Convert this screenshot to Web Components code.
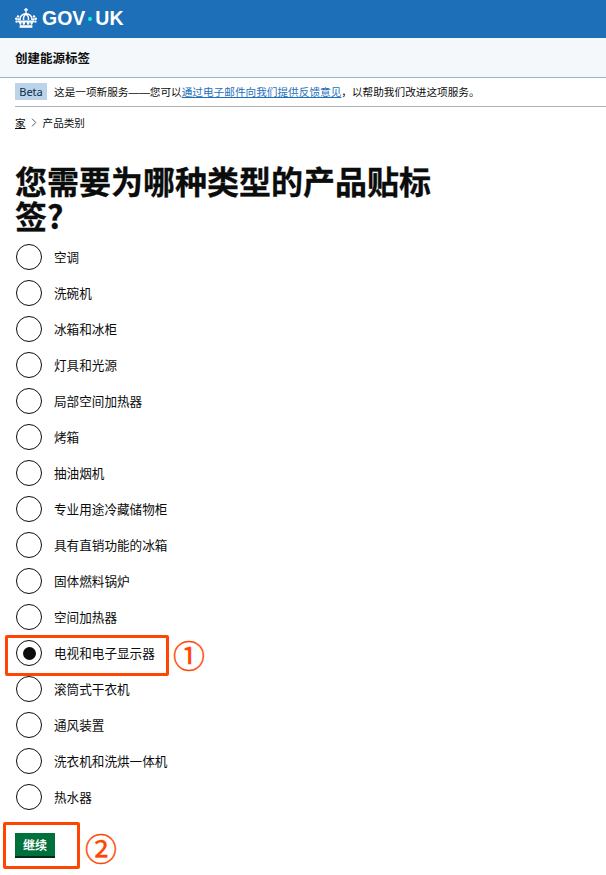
<!DOCTYPE html>
<html lang="zh">
<head>
<meta charset="utf-8">
<title>创建能源标签</title>
<style>
  html, body { margin: 0; padding: 0; background: #fff; }
  body { font-family: "Liberation Sans", "Noto Sans CJK SC", sans-serif; color: #0b0c0c; position: relative; min-height: 875px; }
</style>
</head>
<body>
<gov-header></gov-header>
<gov-service-bar>创建能源标签</gov-service-bar>
<gov-phase-banner>这是一项新服务——您可以<a href="#">通过电子邮件向我们提供反馈意见</a>，以帮助我们改进这项服务。</gov-phase-banner>
<gov-breadcrumbs current="产品类别">家</gov-breadcrumbs>
<product-form title-text="您需要为哪种类型的产品贴标签?">
  <gov-radio>空调</gov-radio>
  <gov-radio>洗碗机</gov-radio>
  <gov-radio>冰箱和冰柜</gov-radio>
  <gov-radio>灯具和光源</gov-radio>
  <gov-radio>局部空间加热器</gov-radio>
  <gov-radio>烤箱</gov-radio>
  <gov-radio>抽油烟机</gov-radio>
  <gov-radio>专业用途冷藏储物柜</gov-radio>
  <gov-radio>具有直销功能的冰箱</gov-radio>
  <gov-radio>固体燃料锅炉</gov-radio>
  <gov-radio>空间加热器</gov-radio>
  <gov-radio checked>电视和电子显示器</gov-radio>
  <gov-radio>滚筒式干衣机</gov-radio>
  <gov-radio>通风装置</gov-radio>
  <gov-radio>洗衣机和洗烘一体机</gov-radio>
  <gov-radio>热水器</gov-radio>
  <gov-button>继续</gov-button>
</product-form>
<call-out num="①" style="--x:5px;--y:635px;--w:164px;--h:41px;--nx:173px;--ny:633px"></call-out>
<call-out num="②" style="--x:3px;--y:822px;--w:77px;--h:47px;--nx:85px;--ny:826px"></call-out>

<script>
class GovHeader extends HTMLElement {
  constructor() {
    super();
    this.attachShadow({ mode: "open" });
    this.shadowRoot.innerHTML = `
      <style>
        :host { display: flex; align-items: center; height: 38px; background: #1d70b8; color: #fff; padding-left: 15px; box-sizing: border-box; }
        svg { width: 22px; height: 20px; margin: -3px 5px 0 0; display: block; }
        .logo { font: bold 19.5px/36px "Liberation Sans", sans-serif; margin-top: -2px; display: flex; align-items: center; }
        .dot { width: 4px; height: 4px; border-radius: 50%; background: #00ffe0; margin: 2px 3px 0 3px; }
      </style>
      <svg viewBox="0 0 22 20" fill="#fff" aria-hidden="true">
        <path d="M10.300 0h1.400v1.200h1.300v1.400h-1.300v2.200h-1.400V2.600H9V1.200h1.300z"/>
        <circle cx="11" cy="5.600" r="1.200"/>
        <path d="M5 12c-.4-3.600 2.400-6.200 6-6.200s6.400 2.600 6 6.200M8.600 12c-.4-2.600.6-4.800 2.400-5.600 1.800.8 2.800 3 2.400 5.600" fill="none" stroke="#fff" stroke-width="1.500"/>
        <circle cx="3" cy="8.400" r="1.200"/><circle cx="19" cy="8.400" r="1.200"/>
        <circle cx="1.300" cy="10.800" r="1.300"/><circle cx="20.700" cy="10.800" r="1.300"/>
        <circle cx="3.600" cy="11.400" r="1.200"/><circle cx="18.400" cy="11.400" r="1.200"/>
        <circle cx="1.600" cy="13.600" r="1.200"/><circle cx="20.400" cy="13.600" r="1.200"/>
        <path d="M3 12.600h16v1.300c-1 .5-1.600 1.600-1.900 2.900h-1.300l-.5-2.600h-.7l-.6 2.600h-1.600l-.8-2.600h-1.200l-.8 2.600H8l-.6-2.600h-.7l-.5 2.600H4.900C4.600 15.500 4 14.400 3 13.900z"/>
        <rect x="4.600" y="17.200" width="12.800" height="2.600"/>
      </svg>
      <span class="logo">GOV<span class="dot"></span>UK</span>`;
  }
}

class GovServiceBar extends HTMLElement {
  constructor() {
    super();
    this.attachShadow({ mode: "open" });
    this.shadowRoot.innerHTML = `
      <style>
        :host { display: flex; align-items: center; height: 40px; box-sizing: border-box; padding: 0 15px 1px; background: #f4f8fb; border-bottom: 1px solid #8eb8dc; font-size: 12.5px; font-weight: bold; color: #0b0c0c; }
      </style>
      <slot></slot>`;
  }
}

class GovPhaseBanner extends HTMLElement {
  constructor() {
    super();
    this.attachShadow({ mode: "open" });
    this.shadowRoot.innerHTML = `
      <style>
        :host { display: flex; align-items: center; height: 29px; box-sizing: border-box; margin-left: 15px; padding-bottom: 1px; border-bottom: 1px solid #b1b4b6; font-size: 10.65px; color: #0b0c0c; white-space: nowrap; }
        .tag { display: block; width: 32px; height: 17px; line-height: 17px; margin-right: 7px; text-align: center; background: #bbd4ea; color: #0c2d4a; font-family: "Noto Sans", sans-serif; font-size: 11px; }
        ::slotted(a) { color: #1d70b8; text-decoration: underline; }
      </style>
      <span class="tag">Beta</span><span><slot></slot></span>`;
  }
}

class GovBreadcrumbs extends HTMLElement {
  constructor() {
    super();
    this.attachShadow({ mode: "open" });
    this.shadowRoot.innerHTML = `
      <style>
        :host { display: flex; align-items: center; height: 30px; padding-left: 15px; font-size: 10.6px; color: #0b0c0c; }
        a { color: inherit; text-decoration: underline; }
        svg { width: 6px; height: 9px; margin: 1px 6px 0 5px; }
      </style>
      <a href="#"><slot></slot></a>
      <svg viewBox="0 0 6 9"><path d="M1 .7 4.800 4.500 1 8.300" fill="none" stroke="#505a5f" stroke-width="1"/></svg>
      <span>${this.getAttribute("current") || ""}</span>`;
  }
}

class ProductForm extends HTMLElement {
  constructor() {
    super();
    this.attachShadow({ mode: "open" });
    this.shadowRoot.innerHTML = `
      <style>
        :host { display: block; padding: 26px 15px 0; }
        h1 { margin: 0 0 5px; width: 420px; font-size: 32px; line-height: 35px; font-weight: bold; -webkit-text-stroke: .3px #0b0c0c; color: #0b0c0c; font-family: "Noto Sans CJK SC", "Liberation Sans", sans-serif; }
        .list { display: flex; flex-direction: column; }
      </style>
      <h1>${this.getAttribute("title-text") || ""}</h1>
      <div class="list"><slot></slot></div>`;
  }
}

class GovRadio extends HTMLElement {
  constructor() {
    super();
    this.attachShadow({ mode: "open" });
    this.shadowRoot.innerHTML = `
      <style>
        :host { display: flex; align-items: center; height: 36px; font-size: 12.6px; color: #0b0c0c; }
        .circle { width: 26px; height: 26px; box-sizing: border-box; margin: 2px 12px 0 1px; border: 1.5px solid #0b0c0c; border-radius: 50%; display: flex; align-items: center; justify-content: center; background: #fff; }
        .dot { width: 13px; height: 13px; border-radius: 50%; background: #0b0c0c; display: none; }
        :host([checked]) .dot { display: block; }
      </style>
      <span class="circle"><span class="dot"></span></span>
      <span><slot></slot></span>`;
  }
}

class GovButton extends HTMLElement {
  constructor() {
    super();
    this.attachShadow({ mode: "open" });
    this.shadowRoot.innerHTML = `
      <style>
        :host { display: block; width: max-content; margin-top: 19px; }
        button { display: block; width: 40px; height: 23px; padding: 0; border: 0; background: #00703c; box-shadow: 0 2px 0 #002d18; color: #fff; font: bold 12px "Liberation Sans", "Noto Sans CJK SC", sans-serif; }
      </style>
      <button type="button"><slot></slot></button>`;
  }
}

// orange annotation box and number drawn on top of the screenshot
class CallOut extends HTMLElement {
  constructor() {
    super();
    this.attachShadow({ mode: "open" });
    this.shadowRoot.innerHTML = `
      <style>
        :host { display: contents; }
        .box { position: absolute; left: var(--x); top: var(--y); width: var(--w); height: var(--h); box-sizing: border-box; border: 3px solid #ff4500; border-radius: 2px; }
        .num { position: absolute; left: var(--nx); top: var(--ny); color: #ff4500; font: 400 32px/42px "Noto Sans CJK SC", sans-serif; -webkit-text-stroke: .4px #ff4500; }
      </style>
      <div class="box"></div>
      <div class="num">${this.getAttribute("num")}</div>`;
  }
}

customElements.define("gov-header", GovHeader);
customElements.define("gov-service-bar", GovServiceBar);
customElements.define("gov-phase-banner", GovPhaseBanner);
customElements.define("gov-breadcrumbs", GovBreadcrumbs);
customElements.define("product-form", ProductForm);
customElements.define("gov-radio", GovRadio);
customElements.define("gov-button", GovButton);
customElements.define("call-out", CallOut);
</script>
</body>
</html>
